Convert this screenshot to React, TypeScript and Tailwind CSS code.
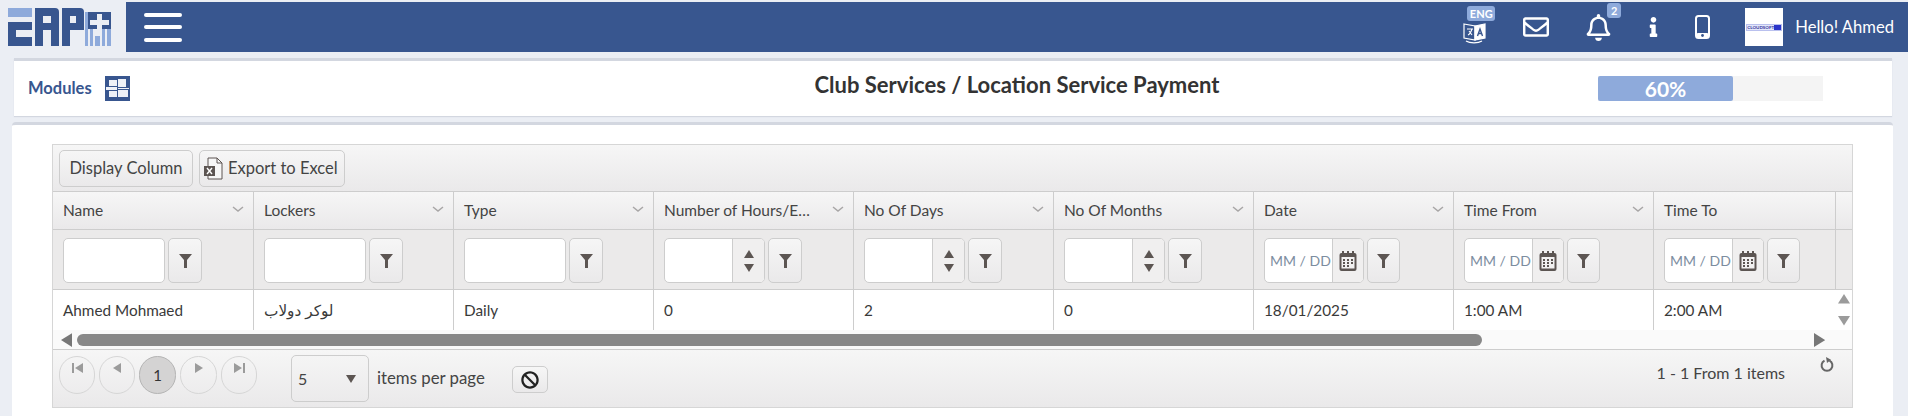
import React from 'react';
import { FaRegEnvelope, FaRegBell, FaInfo, FaBan } from 'react-icons/fa';

const font = { fontFamily: '"Lato", "DejaVu Sans", sans-serif' };

const columns = [
  { title: 'Name', kind: 'text', value: 'Ahmed Mohmaed', width: 'w-[201px]' },
  { title: 'Lockers', kind: 'text', value: 'لوكر دولاب', width: 'w-[200px]' },
  { title: 'Type', kind: 'text', value: 'Daily', width: 'w-[200px]' },
  { title: 'Number of Hours/E…', kind: 'number', value: '0', width: 'w-[200px]' },
  { title: 'No Of Days', kind: 'number', value: '2', width: 'w-[200px]' },
  { title: 'No Of Months', kind: 'number', value: '0', width: 'w-[200px]' },
  { title: 'Date', kind: 'date', value: '18/01/2025', width: 'w-[200px]' },
  { title: 'Time From', kind: 'date', value: '1:00 AM', width: 'w-[200px]' },
  { title: 'Time To', kind: 'date', value: '2:00 AM', width: 'w-[182px]', last: true },
];

const Logo = () => (
  <svg width="104" height="38" viewBox="0 0 104 38" className="shrink-0">
    <rect x="0" y="0" width="24" height="9" fill="#8eaadb" />
    <path d="M0 14h24v8H8v7h16v9H0z" fill="#38568f" />
    <path fillRule="evenodd" d="M27 0h20q4 0 4 4v34h-8V22H35v16h-8zM35 8v7h8V8z" fill="#38568f" />
    <path fillRule="evenodd" d="M54 0h18q4 0 4 4v18H62v16h-8zM62 8v7h6V8z" fill="#38568f" />
    <path d="M77 4h3v34h-3z" fill="#8eaadb" />
    <rect x="80" y="4" width="23" height="17" fill="#38568f" />
    <path d="M82 21h3v17h-3zM87 28h5v10h-5zM94 21h3v17h-3zM99 21h4v17h-4z" fill="#8eaadb" />
    <path d="M89 6h5v6h7v5h-7v7h-5v-7h-7v-5h7z" fill="#ebeef4" />
  </svg>
);

const ModulesIcon = () => (
  <svg width="25" height="25" viewBox="0 0 25 25">
    <rect width="25" height="25" fill="#38568f" />
    <path d="M4 4h8v6H4zM13 3h8v8h-8zM1 11h11v3H1zM13 12h11v1H13zM4 15h8v6H4zM13 14h10v7H13z" fill="#eef1f7" />
  </svg>
);

const LanguageIcon = () => (
  <svg width="24" height="24" viewBox="0 0 24 24" fill="none" stroke="#fff" strokeWidth="1.2">
    <path d="M1 4l11 2v14L1 18z" />
    <path d="M12 6l10-2v14l-10 2z" fill="#fff" />
    <path d="M4 9h6M5 15c2-1 3-3 4-6M6 11l3 4" strokeWidth="1.1" />
    <path d="M14.5 16l2.5-7 2.5 7M15.5 13.5h3" stroke="#38568f" strokeWidth="1.4" />
    <path d="M3 21c4 2.5 12 2.5 16 0" />
  </svg>
);

const PhoneIcon = () => (
  <svg width="15" height="24" viewBox="0 0 15 24">
    <rect x="1" y="1" width="13" height="22" rx="2.5" fill="none" stroke="#fff" strokeWidth="2" />
    <rect x="1" y="18" width="13" height="5" rx="2" fill="#fff" />
    <circle cx="7.5" cy="20.5" r="1.4" fill="#38568f" />
  </svg>
);

const FilterIcon = () => (
  <svg width="13" height="14" viewBox="0 0 13 14">
    <path d="M0 0h13L8 6v8H5V6z" fill="#5c5552" />
  </svg>
);

const CalendarIcon = () => (
  <svg width="18" height="20" viewBox="0 0 18 20">
    <rect x="0.5" y="2" width="17" height="18" rx="2" fill="#5c5552" />
    <rect x="3" y="0" width="2" height="3" fill="#5c5552" />
    <rect x="8" y="0" width="2" height="3" fill="#5c5552" />
    <rect x="13" y="0" width="2" height="3" fill="#5c5552" />
    <rect x="2.5" y="6" width="13" height="11.5" fill="#f1f0f0" />
    <path d="M4 8h2v2H4zM8 8h2v2H8zM12 8h2v2h-2zM4 11h2v2H4zM8 11h2v2H8zM12 11h2v2h-2zM4 14h2v2H4zM8 14h2v2H8z" fill="#5c5552" />
  </svg>
);

const ExcelIcon = () => (
  <svg width="20" height="24" viewBox="0 0 20 24" fill="none">
    <path d="M5 2h9l5 5v16H5z" stroke="#5c5552" strokeWidth="1" fill="#f7f7f7" />
    <path d="M14 2v5h5" stroke="#5c5552" strokeWidth="1" />
    <rect x="1" y="10" width="11" height="10" fill="#5c5552" />
    <path d="M4 12l5 6M9 12l-5 6" stroke="#fff" strokeWidth="1.4" />
  </svg>
);

const ReloadIcon = () => (
  <svg width="14" height="15" viewBox="0 0 14 15" fill="none">
    <path d="M4.5 3.6a5.4 5.4 0 1 0 5 0" stroke="#666" strokeWidth="2" />
    <path d="M6 0l5 2.8L7 6z" fill="#666" />
  </svg>
);

const Chevron = () => (
  <svg width="12" height="7" viewBox="0 0 12 7" fill="none" className="absolute right-[9px] top-[14px]">
    <path d="M1 1l5 4 5-4" stroke="#a8a6a6" strokeWidth="1.5" />
  </svg>
);

const Tri = ({ dir, color = '#5c5552', size = 5 }: { dir: 'up' | 'down' | 'left' | 'right'; color?: string; size?: number }) => {
  const s = size;
  const d = {
    up: `M0 ${s * 1.6}L${s} 0L${s * 2} ${s * 1.6}z`,
    down: `M0 0L${s} ${s * 1.6}L${s * 2} 0z`,
    left: `M${s * 1.6} 0L0 ${s}L${s * 1.6} ${s * 2}z`,
    right: `M0 0L${s * 1.6} ${s}L0 ${s * 2}z`,
  }[dir];
  const horizontal = dir === 'up' || dir === 'down';
  return (
    <svg width={horizontal ? s * 2 : s * 1.6} height={horizontal ? s * 1.6 : s * 2}>
      <path d={d} fill={color} />
    </svg>
  );
};

const FilterButton = ({ narrow }: { narrow?: boolean }) => (
  <button className={`${narrow ? 'w-[33px]' : 'w-[34px]'} h-[45px] ml-[3px] shrink-0 flex items-center justify-center rounded-[5px] border border-[#cdcdcd] bg-gradient-to-b from-[#f6f6f6] to-[#eae9ea]`}>
    <FilterIcon />
  </button>
);

const FilterCell = ({ kind }: { kind: string }) => {
  if (kind === 'number') {
    return (
      <div className="flex">
        <div className="w-[101px] h-[45px] flex rounded-[5px] border border-[#cdcdcd] bg-white overflow-hidden">
          <div className="flex-1" />
          <div className="w-[32px] flex flex-col items-center justify-center gap-[6px] border-l border-[#cdcdcd] bg-[#f0efef]">
            <Tri dir="up" />
            <Tri dir="down" />
          </div>
        </div>
        <FilterButton />
      </div>
    );
  }
  if (kind === 'date') {
    return (
      <div className="flex">
        <div className="w-[100px] h-[45px] flex rounded-[5px] border border-[#cdcdcd] bg-white overflow-hidden">
          <input
            readOnly
            placeholder="MM / DD / YYYY"
            className="w-[67px] shrink-0 pl-[5px] text-[14px] outline-none placeholder:text-[#7c8da0]"
          />
          <div className="flex-1 flex items-center justify-center border-l border-[#cdcdcd] bg-[#f0efef]">
            <CalendarIcon />
          </div>
        </div>
        <FilterButton narrow />
      </div>
    );
  }
  return (
    <div className="flex">
      <div className="w-[102px] h-[45px] rounded-[5px] border border-[#cdcdcd] bg-white" />
      <FilterButton />
    </div>
  );
};

const PagerButton = ({ children, active, className }: { children?: React.ReactNode; active?: boolean; className: string }) => (
  <div className={`${className} h-[38px] shrink-0 rounded-full border flex items-center justify-center ${active ? 'border-[#b4b4b4] bg-[#d4d3d3] text-[#333]' : 'border-[#d6d6d6] pb-[14px]'}`}>
    {children}
  </div>
);

export default function App() {
  return (
    <div className="w-[1908px] h-[416px] overflow-hidden bg-[#ebeef4] text-[#444]" style={font}>
      {/* top bar */}
      <div className="pt-[2px] h-[52px]">
        <div className="flex h-[50px]">
          <div className="w-[126px] shrink-0 pl-[8px] pt-[6px]">
            <Logo />
          </div>
          <div className="flex-1 flex items-center bg-[#38568f] text-white">
            <div className="ml-[18px] w-[38px] flex flex-col gap-[8.5px]">
              <div className="h-[4px] rounded-full bg-white" />
              <div className="h-[4px] rounded-full bg-white" />
              <div className="h-[4px] rounded-full bg-white" />
            </div>
            <div className="ml-auto flex items-center pr-[14px]">
              <div className="relative mr-[36px] mt-[10px]">
                <LanguageIcon />
                <span className="absolute left-[4px] top-[-14px] w-[28px] h-[15px] rounded-[3px] bg-[#8eaadb] text-[11px] leading-[15px] font-bold text-center">ENG</span>
              </div>
              <FaRegEnvelope className="w-[26px] h-[26px] mr-[37px]" />
              <div className="relative mr-[37px]">
                <FaRegBell className="w-[25px] h-[27px]" />
                <span className="absolute left-[21px] top-[-11px] w-[14px] h-[15px] rounded-[3px] bg-[#8eaadb] text-[11px] leading-[15px] font-bold text-center">2</span>
              </div>
              <FaInfo className="w-[11px] h-[20px] mr-[36px]" />
              <PhoneIcon />
              <div className="ml-[35px] w-[38px] h-[38px] bg-white flex items-center justify-center">
                <div className="w-[36px] h-[7px] flex items-center border border-[#b9c0ee] bg-[#e3e6fa] text-[4.5px] leading-[5px] font-bold text-[#30349a] whitespace-nowrap overflow-hidden">
                  <span className="flex-1 text-center">CLOUDSOFT</span>
                  <span className="w-[8px] h-full bg-[#2b35c9]" />
                </div>
              </div>
              <span className="ml-[12px] text-[16.6px] leading-none whitespace-nowrap">Hello! Ahmed</span>
            </div>
          </div>
        </div>
      </div>

      {/* title panel */}
      <div className="ml-[14px] mr-[16px] mt-[6px] h-[58px] flex items-center bg-white border-t-[3px] border-[#d3d7e0] shadow-[0_1px_1px_#d3d7e0]">
        <div className="w-[800px] shrink-0 flex items-center">
          <span className="ml-[14px] text-[16.5px] font-bold text-[#38568f]">Modules</span>
          <span className="ml-[13px]"><ModulesIcon /></span>
        </div>
        <h1 className="w-[406px] shrink-0 -mt-[7px] text-center text-[22px] leading-[26px] font-bold text-[#333] whitespace-nowrap">Club Services / Location Service Payment</h1>
        <div className="ml-[378px] w-[225px] h-[25px] bg-[#f4f4f4]">
          <div className="w-[135px] h-full rounded-[2px] bg-[#8eaadb] text-center text-[21px] leading-[25px] font-bold text-white">60%</div>
        </div>
      </div>

      {/* grid panel */}
      <div className="ml-[12px] mr-[15px] mt-[6px] h-[294px] bg-white rounded-t-[4px] border-t-[3px] border-[#d3d7e0] pl-[40px] pr-[40px] pt-[19px]">
        <div className="w-[1801px] border border-[#d6d6d6]">
          {/* toolbar */}
          <div className="h-[47px] flex items-center gap-[6px] pl-[6px] bg-gradient-to-b from-[#f6f6f6] to-[#eae9ea] border-b border-[#cdcdcd]">
            <button className="w-[134px] h-[37px] rounded-[5px] border border-[#cdcdcd] bg-gradient-to-b from-[#f6f6f6] to-[#eae9ea] text-[16.5px] text-[#444]">Display Column</button>
            <button className="w-[146px] h-[37px] rounded-[5px] border border-[#cdcdcd] bg-gradient-to-b from-[#f6f6f6] to-[#eae9ea] text-[16.5px] text-[#444] flex items-center gap-[5px] pl-[3px] whitespace-nowrap">
              <ExcelIcon />
              <span>Export to Excel</span>
            </button>
          </div>

          {/* header */}
          <div className="flex h-[38px] bg-gradient-to-b from-[#f6f6f6] to-[#eae9ea] border-b border-[#cdcdcd]">
            {columns.map(c => (
              <div key={c.title} className={`relative ${c.width} pl-[10px] shrink-0 border-r border-[#cdcdcd] text-[15.5px] leading-[37px] whitespace-nowrap`}>
                {c.title}
                {!c.last && <Chevron />}
              </div>
            ))}
            <div className="flex-1" />
          </div>

          {/* filter row */}
          <div className="flex h-[60px] bg-[#ebeaea] border-b border-[#cdcdcd]">
            {columns.map(c => (
              <div key={c.title} className={`${c.width} shrink-0 pl-[10px] pt-[8px] border-r border-[#cdcdcd]`}>
                <FilterCell kind={c.kind} />
              </div>
            ))}
            <div className="flex-1" />
          </div>

          {/* data row */}
          <div className="flex h-[40px]">
            {columns.map(c => (
              <div key={c.title} className={`${c.width} ${c.last ? 'border-r-0' : 'border-r'} shrink-0 pl-[10px] border-[#cdcdcd] text-[15.3px] leading-[40px] text-[#3a3a3a]`}>
                {c.value}
              </div>
            ))}
            <div className="flex-1 flex flex-col items-center justify-center gap-[12px]">
              <Tri dir="up" color="#9b9b9b" size={6} />
              <Tri dir="down" color="#9b9b9b" size={6} />
            </div>
          </div>

          {/* scrollbar */}
          <div className="h-[19px] flex items-center bg-[#fafafa] pl-[8px] pr-[27px]">
            <Tri dir="left" color="#777" size={7} />
            <div className="ml-[5px] w-[1405px] h-[12px] rounded-full bg-[#888]" />
            <div className="ml-auto"><Tri dir="right" color="#777" size={7} /></div>
          </div>

          {/* pager */}
          <div className="relative h-[58px] flex items-start pl-[6px] pt-[5px] bg-gradient-to-b from-[#f6f6f6] to-[#eae9ea] border-t border-[#cdcdcd]">
            <div className="flex gap-[4px] mt-[1px]">
              <PagerButton className="w-[36px]"><svg width="11" height="10"><path d="M0 0h2v10H0zM11 0v10L3 5z" fill="#9b9b9b" /></svg></PagerButton>
              <PagerButton className="w-[36px]"><Tri dir="left" color="#9b9b9b" /></PagerButton>
              <PagerButton className="w-[37px]" active><span className="text-[15px]">1</span></PagerButton>
              <PagerButton className="w-[37px]"><Tri dir="right" color="#9b9b9b" /></PagerButton>
              <PagerButton className="w-[36px]"><svg width="11" height="10"><path d="M9 0h2v10H9zM0 0v10l8-5z" fill="#9b9b9b" /></svg></PagerButton>
            </div>
            <div className="ml-[34px] w-[78px] h-[47px] flex items-center justify-between pl-[6px] pr-[12px] rounded-[5px] border border-[#cdcdcd] text-[16px]">
              <span>5</span>
              <Tri dir="down" />
            </div>
            <span className="ml-[8px] text-[16.8px] leading-[45px] whitespace-nowrap">items per page</span>
            <button className="ml-[27px] mt-[11px] w-[36px] h-[27px] flex items-center justify-center rounded-[5px] border border-[#cdcdcd] bg-gradient-to-b from-[#f6f6f6] to-[#eae9ea]">
              <FaBan className="w-[18px] h-[18px] text-[#222]" />
            </button>
            <span className="ml-auto mr-[67px] text-[16px] leading-[36px] whitespace-nowrap">1 - 1 From 1 items</span>
            <span className="absolute right-[18px] top-[7px]"><ReloadIcon /></span>
          </div>
        </div>
      </div>
    </div>
  );
}
